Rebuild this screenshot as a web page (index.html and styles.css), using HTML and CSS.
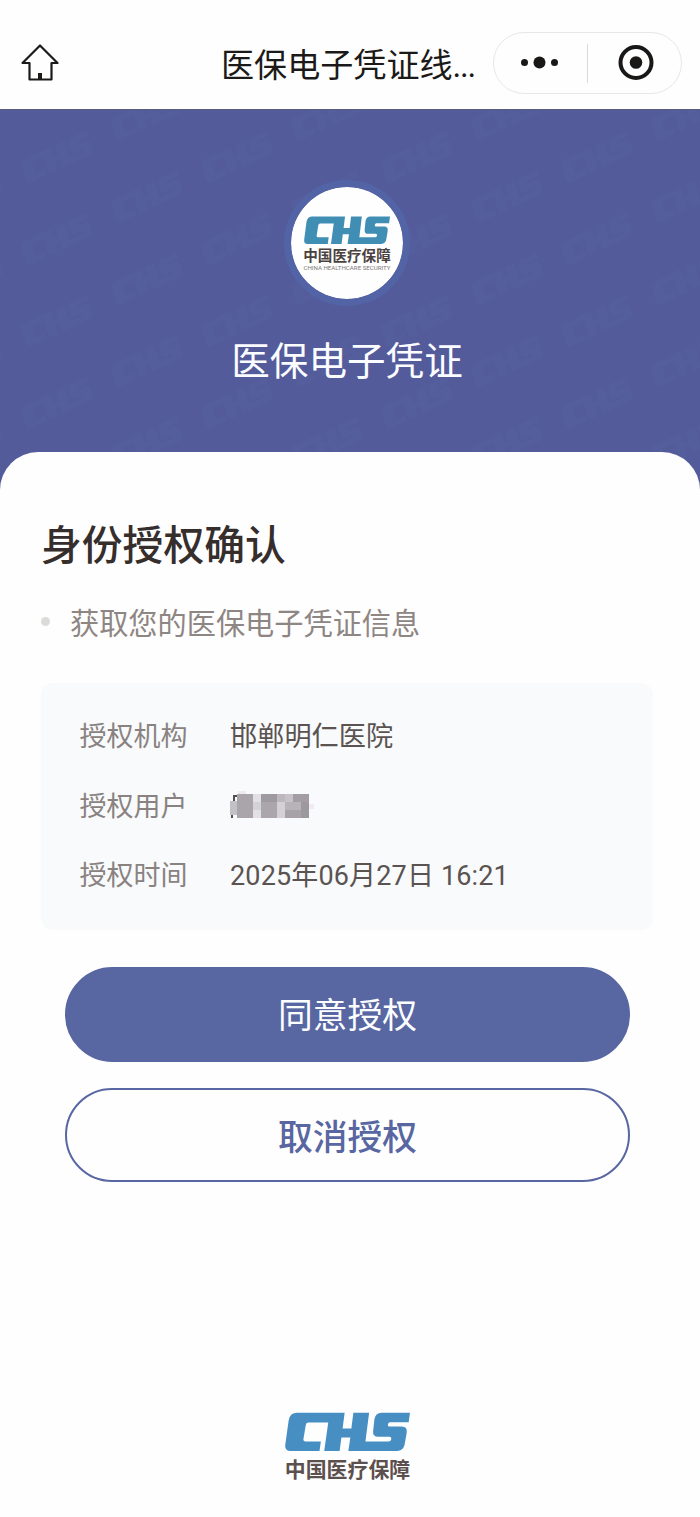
FILE: index.html
```html
<!DOCTYPE html>
<html lang="zh-CN">
<head>
<meta charset="utf-8">
<title>医保电子凭证</title>
<link rel="stylesheet" href="styles.css">
</head>
<body>
<svg class="defs" width="0" height="0" aria-hidden="true">
  <symbol id="chs" viewBox="0 0 373 115" preserveAspectRatio="none">
    <path d="M36 2H178L163 115H117L129 31H70Q63 31 62 38L55 80Q54 87 61 87H107L103 115H16Q-2 115 1 95L11 24Q15 2 36 2Z"/>
    <path d="M204 2H251L240 87H309Q316 87 317 80Q318 73 311 73H278Q261 73 263 56L267 20Q271 2 288 2H373L369 30H314Q308 30 307 36.500Q306 43 312 43H348Q366 43 363 62L357 96Q353 115 335 115H189L195 75H166L169 49H198Z"/>
  </symbol>
</svg>
<header class="navbar">
  <svg class="home" viewBox="0 0 38 38" fill="none" stroke="#1c1a19" stroke-width="2.2" stroke-linejoin="round">
    <path d="M19 1.500L36.500 19H30.500V35.500H8.500V19H1.500Z"/>
    <path d="M19 29V35.500" stroke-width="4"/>
  </svg>
  <h1 class="nav-title">医保电子凭证线<span class="dots">...</span></h1>
  <div class="capsule">
    <svg class="more" viewBox="0 0 40 14" fill="#1a1817"><circle cx="4.500" cy="6.500" r="3.500"/><circle cx="19.500" cy="6.500" r="6"/><circle cx="34.500" cy="6.500" r="3.500"/></svg>
    <span class="divider"></span>
    <svg class="target" viewBox="0 0 36 36"><circle cx="18" cy="17.500" r="15.500" fill="none" stroke="#1a1817" stroke-width="4"/><circle cx="18" cy="17.500" r="6.300" fill="#1a1817"/></svg>
  </div>
</header>
<section class="hero">
  <svg class="watermark" width="700" height="380" fill="#7a86bd">
    <defs>
      <pattern id="marks" x="10" y="0" width="180" height="82" patternUnits="userSpaceOnUse">
        <use href="#chs" x="-38" y="-12" width="76" height="24" transform="translate(47 47) rotate(-25)"/>
        <use href="#chs" x="-38" y="-12" width="76" height="24" transform="translate(137 5) rotate(-25)"/>
        <use href="#chs" x="-38" y="-12" width="76" height="24" transform="translate(137 87) rotate(-25)"/>
      </pattern>
    </defs>
    <rect width="700" height="380" fill="url(#marks)"/>
  </svg>
  <div class="emblem">
    <svg class="emblem-mark"><use href="#chs" width="86" height="28"/></svg>
    <div class="emblem-name">中国医疗保障</div>
    <svg class="emblem-sub" viewBox="0 0 88 7"><text x="0.500" y="5.200" textLength="87" lengthAdjust="spacingAndGlyphs">CHINA HEALTHCARE SECURITY</text></svg>
  </div>
  <div class="hero-title">医保电子凭证</div>
</section>
<main class="sheet">
  <h2 class="heading">身份授权确认</h2>
  <p class="scope">获取您的医保电子凭证信息</p>
  <dl class="details">
    <div class="row"><dt>授权机构</dt><dd>邯郸明仁医院</dd></div>
    <div class="row"><dt>授权用户</dt><dd>
      <svg class="mosaic" viewBox="0 0 86 30" shape-rendering="crispEdges">
        <rect x="0" y="10" width="7" height="14" fill="#c4c1c6"/><path d="M3 10V4H7V6H5V10ZM1 24H3V27H1Z" fill="#55504f"/>
        <rect x="7" y="3" width="16" height="24" fill="#aaa5ab"/>
        <rect x="8" y="0" width="8" height="3" fill="#f0ebf2"/>
        <rect x="23" y="3" width="8" height="24" fill="#e3dfe6"/><rect x="23" y="11" width="8" height="8" fill="#d5d1d8"/>
        <rect x="31" y="3" width="16" height="24" fill="#aba6ac"/><rect x="31" y="3" width="16" height="8" fill="#9f9aa0"/>
        <rect x="47" y="3" width="8" height="24" fill="#d4d0d6"/><rect x="47" y="3" width="8" height="8" fill="#bdb8be"/>
        <rect x="55" y="3" width="24" height="24" fill="#b8b3b9"/><rect x="55" y="3" width="8" height="8" fill="#c7c2c9"/><rect x="63" y="3" width="16" height="8" fill="#a49ea4"/><rect x="55" y="19" width="16" height="8" fill="#a8a2a8"/><rect x="71" y="11" width="8" height="16" fill="#9d979e"/>
        <rect x="79" y="13" width="5" height="5" fill="#f0ebf2"/>
      </svg></dd></div>
    <div class="row"><dt>授权时间</dt><dd class="time">2025年06月27日 16:21</dd></div>
  </dl>
  <div class="actions">
    <button class="btn primary">同意授权</button>
    <button class="btn outline">取消授权</button>
  </div>
</main>
<footer class="footer">
  <svg class="footer-mark"><use href="#chs" width="125" height="39"/></svg>
  <div class="footer-name">中国医疗保障</div>
</footer>
</body>
</html>
```
FILE: styles.css
```css
* { box-sizing: border-box; }
body {
  margin: 0;
  width: 700px;
  height: 1517px;
  display: flex;
  flex-direction: column;
  background: #fefefe;
  font-family: Roboto, "Noto Sans CJK SC", sans-serif;
  overflow: hidden;
}
h1, h2, p, dl, dd { margin: 0; font-weight: 400; }
svg { display: block; flex: none; }
.defs { position: absolute; }
.navbar {
  height: 110px;
  flex: none;
  display: flex;
  align-items: center;
  padding: 17px 18px 0 21px;
  border-bottom: 1px solid #5a5c7c;
}
.home { width: 38px; height: 38px; }
.nav-title {
  margin-left: 162px;
  width: 272px;
  padding-top: 5px;
  font-size: 33.1px;
  line-height: 40px;
  color: #1c1a19;
  white-space: nowrap;
}
.dots { letter-spacing: -1.2px; }
.capsule {
  width: 189px;
  height: 62px;
  border: 1.5px solid #e7e7e7;
  border-radius: 31px;
  display: flex;
  align-items: center;
  padding-left: 26px;
}
.more { width: 40px; height: 14px; }
.divider { width: 1px; height: 39px; margin: 0 30px 0 27px; background: #dadada; }
.target { width: 36px; height: 36px; }
.hero {
  height: 380px;
  flex: none;
  position: relative;
  display: flex;
  flex-direction: column;
  align-items: center;
  padding: 70px 6px 0 0;
  background: #535b9a;
}
.watermark { position: absolute; left: 0; top: 0; opacity: .065; }
.emblem {
  position: relative;
  width: 126px;
  height: 126px;
  border: 7px solid #5263a6;
  border-radius: 50%;
  background: #fefefe;
  background-clip: padding-box;
  display: flex;
  flex-direction: column;
  align-items: center;
  padding-top: 29px;
}
.emblem-mark { width: 86px; height: 28px; fill: #418eb5; }
.emblem-name {
  margin-top: 3px;
  font-size: 14.6px;
  line-height: 18px;
  font-weight: 700;
  color: #4b4240;
  white-space: nowrap;
}
.emblem-sub { width: 88px; height: 7px; font-size: 4.9px; fill: #7d7775; }
.hero-title {
  position: relative;
  margin-top: 34px;
  font-size: 38.6px;
  line-height: 44px;
  color: #fbfcff;
}
.sheet {
  position: relative;
  flex: none;
  height: 900px;
  margin-top: -38px;
  padding: 69px 47px 0 41px;
  background: #fefefe;
  border-radius: 38px 38px 0 0;
}
.heading { font-size: 40.8px; line-height: 50px; font-weight: 500; color: #352e2c; }
.scope {
  display: flex;
  align-items: center;
  margin-top: 34px;
  font-size: 29.2px;
  line-height: 38px;
  color: #8e8683;
}
.scope::before {
  content: "";
  width: 9px;
  height: 9px;
  margin: 0 20px 6px 0;
  border-radius: 50%;
  background: #dddbd9;
}
.details {
  height: 247px;
  margin-top: 40px;
  padding: 34px 39px 0 38.5px;
  border-radius: 12px;
  background: #f8fafc;
}
.row { display: flex; height: 69.5px; font-size: 27px; line-height: 40px; }
.row dt { width: 150.5px; color: #898280; }
.row dd { color: #5b5351; font-size: 27.2px; white-space: nowrap; }
.row .time { font-size: 27px; letter-spacing: .15px; }
.mosaic { width: 86px; height: 30px; margin-top: 4px; }
.actions { display: flex; flex-direction: column; gap: 26px; margin: 37px 23px 0 24px; }
.btn {
  height: 94.5px;
  border: 2px solid #5866a1;
  border-radius: 48px;
  padding: 3px 0 0;
  font-family: inherit;
  font-size: 34.8px;
  line-height: 44px;
}
.primary { background: #5866a1; color: #fbfdff; }
.outline { background: transparent; color: #5866a1; font-weight: 500; padding-top: 6px; }
.footer { flex: none; margin-top: 60px; display: flex; flex-direction: column; align-items: center; padding-right: 5px; }
.footer-mark { width: 125px; height: 39px; fill: #478fc2; }
.footer-name { margin-top: 6px; font-size: 20.9px; line-height: 26px; font-weight: 700; color: #5c504e; }
```
